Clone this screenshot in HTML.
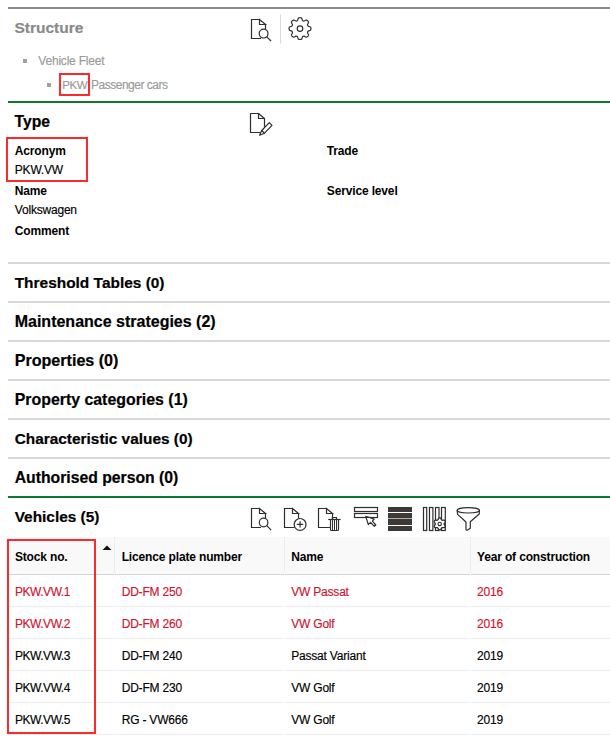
<!DOCTYPE html>
<html><head><meta charset="utf-8">
<style>
html,body{margin:0;padding:0;background:#fff;}
body{width:610px;height:738px;position:relative;overflow:hidden;font-family:"Liberation Sans",sans-serif;color:#111;}
.t{position:absolute;white-space:nowrap;line-height:1;}
.b{font-weight:bold;}
.h{font-size:15.7px;font-weight:bold;color:#000;-webkit-text-stroke:0.2px currentColor;}
.l{font-size:12px;letter-spacing:-0.15px;font-weight:bold;color:#000;}
.v{font-size:12px;letter-spacing:-0.2px;color:#000;-webkit-text-stroke:0.15px currentColor;}
.hr{position:absolute;left:8px;right:0;height:2px;background:#d9d9d9;}
.red{color:#d3122e;}
.box{position:absolute;border:2px solid #fb2b2b;box-sizing:border-box;}
svg{position:absolute;overflow:visible;}
</style></head><body>

<!-- Structure section -->
<div class="hr" style="top:7px;background:#8a8a8a;"></div>
<div class="t h" style="left:14.5px;top:20px;color:#8a8a8a;font-size:15.5px;">Structure</div>

<svg style="left:0;top:0" width="610" height="60"><g fill="none" stroke="#2e2e2e" stroke-width="1.2"><path d="M259.5 19.5 H251.5 V38.5 H261"/><path d="M259.5 19.5 V24.5 H265.5 Z"/><path d="M265.5 24.5 V29.2"/><circle cx="263.6" cy="33.6" r="4.4"/><path d="M266.8 36.8 L271 41"/></g><line x1="280.5" y1="14.5" x2="280.5" y2="43.5" stroke="#d9d9d9" stroke-width="1"/><g fill="none" stroke="#2e2e2e" stroke-width="1.2"><path d="M310.90 28.60L310.89 28.26L310.86 27.92L310.79 27.58L310.67 27.25L310.42 26.95L309.98 26.70L309.35 26.51L308.73 26.36L308.30 26.19L308.03 25.99L307.86 25.77L307.73 25.54L307.63 25.30L307.56 25.04L307.52 24.77L307.57 24.44L307.76 24.01L308.09 23.47L308.40 22.89L308.54 22.40L308.50 22.01L308.35 21.69L308.16 21.40L307.94 21.14L307.71 20.89L307.46 20.66L307.20 20.44L306.91 20.25L306.59 20.10L306.20 20.06L305.71 20.20L305.13 20.51L304.59 20.84L304.16 21.03L303.83 21.08L303.56 21.04L303.30 20.97L303.06 20.87L302.83 20.74L302.61 20.57L302.41 20.30L302.24 19.87L302.09 19.25L301.90 18.62L301.65 18.18L301.35 17.93L301.02 17.81L300.68 17.74L300.34 17.71L300.00 17.70L299.66 17.71L299.32 17.74L298.98 17.81L298.65 17.93L298.35 18.18L298.10 18.62L297.91 19.25L297.76 19.87L297.59 20.30L297.39 20.57L297.17 20.74L296.94 20.87L296.70 20.97L296.44 21.04L296.17 21.08L295.84 21.03L295.41 20.84L294.87 20.51L294.29 20.20L293.80 20.06L293.41 20.10L293.09 20.25L292.80 20.44L292.54 20.66L292.29 20.89L292.06 21.14L291.84 21.40L291.65 21.69L291.50 22.01L291.46 22.40L291.60 22.89L291.91 23.47L292.24 24.01L292.43 24.44L292.48 24.77L292.44 25.04L292.37 25.30L292.27 25.54L292.14 25.77L291.97 25.99L291.70 26.19L291.27 26.36L290.65 26.51L290.02 26.70L289.58 26.95L289.33 27.25L289.21 27.58L289.14 27.92L289.11 28.26L289.10 28.60L289.11 28.94L289.14 29.28L289.21 29.62L289.33 29.95L289.58 30.25L290.02 30.50L290.65 30.69L291.27 30.84L291.70 31.01L291.97 31.21L292.14 31.43L292.27 31.66L292.37 31.90L292.44 32.16L292.48 32.43L292.43 32.76L292.24 33.19L291.91 33.73L291.60 34.31L291.46 34.80L291.50 35.19L291.65 35.51L291.84 35.80L292.06 36.06L292.29 36.31L292.54 36.54L292.80 36.76L293.09 36.95L293.41 37.10L293.80 37.14L294.29 37.00L294.87 36.69L295.41 36.36L295.84 36.17L296.17 36.12L296.44 36.16L296.70 36.23L296.94 36.33L297.17 36.46L297.39 36.63L297.59 36.90L297.76 37.33L297.91 37.95L298.10 38.58L298.35 39.02L298.65 39.27L298.98 39.39L299.32 39.46L299.66 39.49L300.00 39.50L300.34 39.49L300.68 39.46L301.02 39.39L301.35 39.27L301.65 39.02L301.90 38.58L302.09 37.95L302.24 37.33L302.41 36.90L302.61 36.63L302.83 36.46L303.06 36.33L303.30 36.23L303.56 36.16L303.83 36.12L304.16 36.17L304.59 36.36L305.13 36.69L305.71 37.00L306.20 37.14L306.59 37.10L306.91 36.95L307.20 36.76L307.46 36.54L307.71 36.31L307.94 36.06L308.16 35.80L308.35 35.51L308.50 35.19L308.54 34.80L308.40 34.31L308.09 33.73L307.76 33.19L307.57 32.76L307.52 32.43L307.56 32.16L307.63 31.90L307.73 31.66L307.86 31.43L308.03 31.21L308.30 31.01L308.73 30.84L309.35 30.69L309.98 30.50L310.42 30.25L310.67 29.95L310.79 29.62L310.86 29.28L310.89 28.94Z"/><circle cx="300" cy="28.6" r="2.8"/></g></svg>

<div style="position:absolute;left:23px;top:59px;width:4px;height:4px;background:#a0a0a0"></div>
<div class="t v" style="left:38.3px;top:54.8px;color:#9a9a9a;">Vehicle Fleet</div>
<div style="position:absolute;left:47px;top:83px;width:4px;height:4px;background:#a0a0a0"></div>
<div class="box" style="left:59px;top:73px;width:31px;height:23px;"></div>
<div class="t v" style="left:62.2px;top:78.5px;color:#9a9a9a;font-size:11.6px;letter-spacing:-0.5px;">PKW</div>
<div class="t v" style="left:91.1px;top:79px;color:#9a9a9a;letter-spacing:-0.5px;">Passenger cars</div>

<div class="hr" style="top:101px;background:#0a7a30;"></div>

<!-- Type -->
<div class="t h" style="left:14.5px;top:114px;font-size:15.7px;">Type</div>
<svg style="left:0;top:0" width="610" height="140"><g fill="none" stroke="#2e2e2e" stroke-width="1.2" stroke-linejoin="round"><path d="M258.5 113.5 H250.5 V132.5 H260.4"/><path d="M258.5 113.5 V118.5 H264.5 Z"/><path d="M264.5 118.5 V126.9"/><path d="M269.3 122.6 L272 125.4 L264.5 133.2 L259.6 135.2 L261.7 130.5 Z"/><path d="M261.7 130.5 L264.5 133.2"/></g></svg>

<div class="box" style="left:6px;top:137px;width:82px;height:45px;"></div>
<div class="t l" style="left:14.8px;top:144.5px;">Acronym</div>
<div class="t v" style="left:14.8px;top:164px;">PKW.VW</div>
<div class="t l" style="left:14.8px;top:185px;">Name</div>
<div class="t v" style="left:14.8px;top:204px;">Volkswagen</div>
<div class="t l" style="left:14.8px;top:225px;">Comment</div>
<div class="t l" style="left:326.8px;top:145px;">Trade</div>
<div class="t l" style="left:326.8px;top:185px;">Service level</div>

<!-- accordion -->
<div class="hr" style="top:262px;"></div>
<div class="t h" style="left:14.7px;top:275px;font-size:15.45px;">Threshold Tables (0)</div>
<div class="hr" style="top:301px;"></div>
<div class="t h" style="left:14.7px;top:314px;font-size:16.0px;">Maintenance strategies (2)</div>
<div class="hr" style="top:340px;"></div>
<div class="t h" style="left:14.7px;top:351.9px;font-size:16.1px;">Properties (0)</div>
<div class="hr" style="top:379px;"></div>
<div class="t h" style="left:14.7px;top:392px;font-size:15.9px;">Property categories (1)</div>
<div class="hr" style="top:418px;"></div>
<div class="t h" style="left:14.7px;top:431px;font-size:15.4px;">Characteristic values (0)</div>
<div class="hr" style="top:457px;"></div>
<div class="t h" style="left:14.7px;top:470px;font-size:15.75px;">Authorised person (0)</div>
<div class="hr" style="top:496px;background:#0a7a30;"></div>

<!-- Vehicles -->
<svg style="left:0;top:0" width="610" height="540"><g fill="none" stroke="#2e2e2e" stroke-width="1.2"><path d="M259.5 508.5 H251.5 V527.5 H261"/><path d="M259.5 508.5 V513.5 H265.5 Z"/><path d="M265.5 513.5 V518.3"/><circle cx="263.6" cy="522.5" r="4.3"/><path d="M266.8 525.7 L271.2 530.1"/><path d="M292.5 508.5 H284.5 V527.5 H294.5"/><path d="M292.5 508.5 V513.5 H298.5 Z"/><path d="M298.5 513.5 V518.5"/><circle cx="300.1" cy="524.4" r="5.9"/><path d="M296.9 524.4 H303.2 M300.1 521.2 V527.5"/><path d="M326.5 508.5 H318.5 V527.5 H330.5"/><path d="M326.5 508.5 V513.5 H332.5 Z"/><path d="M332.5 513.5 V519"/><path d="M328.2 519.5 H340.6"/><path d="M332.5 519.5 V517.5 H336.5 V519.5"/><path d="M330.5 519.5 V529.5 Q330.5 530.5 331.5 530.5 H337.5 Q338.5 530.5 338.5 529.5 V519.5"/><path d="M332.5 520 V530 M334.5 520 V530 M336.5 520 V530" stroke-width="1"/><rect x="354.5" y="507.5" width="23" height="4" /><rect x="354.5" y="513.5" width="23" height="4" /></g><path d="M365.8 516.3 L368.3 524.7 L370.6 522.3 L374.3 526.4 L375.8 525 L372.4 521.2 L374.2 519.1 Z" fill="#fff" stroke="#2e2e2e" stroke-width="1.2" stroke-linejoin="round"/><g fill="#3d3936"><rect x="388" y="507" width="24" height="5"/><rect x="388" y="513" width="24" height="5"/><rect x="388" y="518.6" width="24" height="6.4"/><rect x="388" y="526" width="24" height="5"/></g><g fill="none" stroke="#2e2e2e" stroke-width="1.2"><rect x="423.5" y="507.5" width="3.2" height="23"/><rect x="429.5" y="507.5" width="3.4" height="23"/><rect x="435.5" y="507.5" width="3.5" height="23"/><rect x="441.5" y="507.5" width="3.8" height="23"/></g><path d="M444.15 523.90L444.15 523.76L444.16 523.62L444.19 523.48L444.23 523.33L444.31 523.17L444.42 523.00L444.59 522.81L444.78 522.59L444.96 522.37L445.09 522.15L445.16 521.93L445.18 521.73L445.15 521.54L445.11 521.36L445.04 521.18L444.96 521.01L444.86 520.85L444.76 520.69L444.65 520.54L444.52 520.40L444.37 520.28L444.20 520.18L443.99 520.12L443.75 520.10L443.47 520.13L443.18 520.19L442.92 520.25L442.70 520.27L442.52 520.27L442.36 520.24L442.22 520.19L442.09 520.14L441.96 520.07L441.84 520.00L441.73 519.92L441.61 519.84L441.50 519.73L441.40 519.60L441.31 519.43L441.23 519.20L441.14 518.94L441.04 518.66L440.92 518.42L440.78 518.24L440.62 518.11L440.44 518.02L440.26 517.96L440.08 517.93L439.89 517.91L439.70 517.90L439.51 517.91L439.32 517.93L439.14 517.96L438.96 518.02L438.78 518.11L438.62 518.24L438.48 518.42L438.36 518.66L438.26 518.94L438.17 519.20L438.09 519.43L438.00 519.60L437.90 519.73L437.79 519.84L437.67 519.92L437.56 520.00L437.44 520.07L437.31 520.14L437.18 520.19L437.04 520.24L436.88 520.27L436.70 520.27L436.48 520.25L436.22 520.19L435.93 520.13L435.65 520.10L435.41 520.12L435.20 520.18L435.03 520.28L434.88 520.40L434.75 520.54L434.64 520.69L434.54 520.85L434.44 521.01L434.36 521.18L434.29 521.36L434.25 521.54L434.22 521.73L434.24 521.93L434.31 522.15L434.44 522.37L434.62 522.59L434.81 522.81L434.98 523.00L435.09 523.17L435.17 523.33L435.21 523.48L435.24 523.62L435.25 523.76L435.25 523.90L435.25 524.04L435.24 524.18L435.21 524.32L435.17 524.47L435.09 524.63L434.98 524.80L434.81 524.99L434.62 525.21L434.44 525.43L434.31 525.65L434.24 525.87L434.22 526.07L434.25 526.26L434.29 526.44L434.36 526.62L434.44 526.79L434.54 526.95L434.64 527.11L434.75 527.26L434.88 527.40L435.03 527.52L435.20 527.62L435.41 527.68L435.65 527.70L435.93 527.67L436.22 527.61L436.48 527.55L436.70 527.53L436.88 527.53L437.04 527.56L437.18 527.61L437.31 527.66L437.44 527.73L437.56 527.80L437.67 527.88L437.79 527.96L437.90 528.07L438.00 528.20L438.09 528.37L438.17 528.60L438.26 528.86L438.36 529.14L438.48 529.38L438.62 529.56L438.78 529.69L438.96 529.78L439.14 529.84L439.32 529.87L439.51 529.89L439.70 529.90L439.89 529.89L440.08 529.87L440.26 529.84L440.44 529.78L440.62 529.69L440.78 529.56L440.92 529.38L441.04 529.14L441.14 528.86L441.23 528.60L441.31 528.37L441.40 528.20L441.50 528.07L441.61 527.96L441.73 527.88L441.84 527.80L441.96 527.73L442.09 527.66L442.22 527.61L442.36 527.56L442.52 527.53L442.70 527.53L442.92 527.55L443.18 527.61L443.47 527.67L443.75 527.70L443.99 527.68L444.20 527.62L444.37 527.52L444.52 527.40L444.65 527.26L444.76 527.11L444.86 526.95L444.96 526.79L445.04 526.62L445.11 526.44L445.15 526.26L445.18 526.07L445.16 525.87L445.09 525.65L444.96 525.43L444.78 525.21L444.59 524.99L444.42 524.80L444.31 524.63L444.23 524.47L444.19 524.32L444.16 524.18L444.15 524.04Z" fill="#fff" stroke="#2e2e2e" stroke-width="1.3"/><circle cx="439.7" cy="523.9" r="1.7" fill="none" stroke="#2e2e2e" stroke-width="1.1"/><g fill="none" stroke="#2e2e2e" stroke-width="1.2" stroke-linejoin="round"><ellipse cx="468.3" cy="510.3" rx="11.2" ry="2.7"/><path d="M457.1 510.3 L457.6 514.4 L466 522 V529.6 Q466.3 530.4 467 530.2 L470.3 528.2 V521.8 L479.2 514 L479.5 510.3"/></g></svg>
<div class="t h" style="left:14.7px;top:509px;font-size:15.4px;">Vehicles (5)</div>

<!-- table header -->
<div style="position:absolute;left:8px;right:0;top:537px;height:37px;background:#f9f9f9;"></div>
<div style="position:absolute;left:8px;right:0;top:574px;height:1px;background:#d3d3d3;"></div>
<div style="position:absolute;left:114px;top:537px;width:1px;height:37px;background:#ececec;"></div>
<div style="position:absolute;left:284px;top:537px;width:1px;height:37px;background:#ececec;"></div>
<div style="position:absolute;left:470px;top:537px;width:1px;height:37px;background:#ececec;"></div>
<svg style="left:0;top:0" width="610" height="560"><path d="M102.5 550 L107 545.5 L111.5 550 Z" fill="#111"/></svg>
<div class="t l" style="left:14.9px;top:551px;">Stock no.</div>
<div class="t l" style="left:121.7px;top:551px;">Licence plate number</div>
<div class="t l" style="left:291.2px;top:551px;">Name</div>
<div class="t l" style="left:477px;top:551px;">Year of construction</div>

<!-- rows -->
<div style="position:absolute;left:8px;right:0;top:606px;height:1px;background:#ececec;"></div>
<div style="position:absolute;left:8px;right:0;top:638px;height:1px;background:#ececec;"></div>
<div style="position:absolute;left:8px;right:0;top:670px;height:1px;background:#ececec;"></div>
<div style="position:absolute;left:8px;right:0;top:702px;height:1px;background:#ececec;"></div>
<div style="position:absolute;left:8px;right:0;top:734px;height:1px;background:#ececec;"></div>

<div style="position:absolute;left:114px;top:574px;width:1px;height:161px;background:#fff;"></div><div style="position:absolute;left:284px;top:574px;width:1px;height:161px;background:#fff;"></div><div style="position:absolute;left:470px;top:574px;width:1px;height:161px;background:#fff;"></div>
<div class="t v red" style="left:14.9px;top:586px;letter-spacing:-0.45px;">PKW.VW.1</div>
<div class="t v red" style="left:121.7px;top:586px;">DD-FM 250</div>
<div class="t v red" style="left:291.2px;top:586px;">VW Passat</div>
<div class="t v red" style="left:477px;top:586px;">2016</div>

<div class="t v red" style="left:14.9px;top:618px;letter-spacing:-0.45px;">PKW.VW.2</div>
<div class="t v red" style="left:121.7px;top:618px;">DD-FM 260</div>
<div class="t v red" style="left:291.2px;top:618px;">VW Golf</div>
<div class="t v red" style="left:477px;top:618px;">2016</div>

<div class="t v" style="left:14.9px;top:650px;letter-spacing:-0.45px;">PKW.VW.3</div>
<div class="t v" style="left:121.7px;top:650px;">DD-FM 240</div>
<div class="t v" style="left:291.2px;top:650px;">Passat Variant</div>
<div class="t v" style="left:477px;top:650px;">2019</div>

<div class="t v" style="left:14.9px;top:682px;letter-spacing:-0.45px;">PKW.VW.4</div>
<div class="t v" style="left:121.7px;top:682px;">DD-FM 230</div>
<div class="t v" style="left:291.2px;top:682px;">VW Golf</div>
<div class="t v" style="left:477px;top:682px;">2019</div>

<div class="t v" style="left:14.9px;top:714px;letter-spacing:-0.45px;">PKW.VW.5</div>
<div class="t v" style="left:121.7px;top:714px;">RG - VW666</div>
<div class="t v" style="left:291.2px;top:714px;">VW Golf</div>
<div class="t v" style="left:477px;top:714px;">2019</div>

<div class="box" style="left:7px;top:539px;width:89px;height:195px;"></div>

</body></html>
